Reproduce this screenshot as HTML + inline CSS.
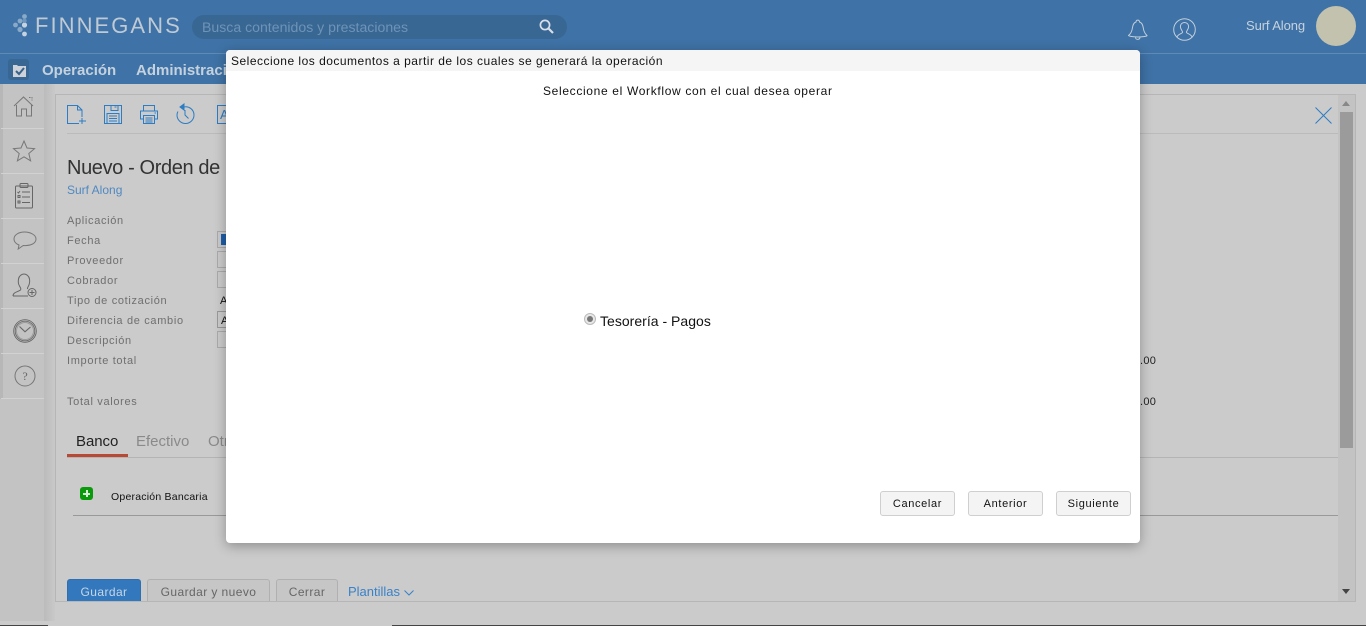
<!DOCTYPE html>
<html lang="es"><head><meta charset="utf-8"><title>Finnegans</title>
<style>
html,body{margin:0;padding:0;width:1366px;height:626px;overflow:hidden;background:#cbcbcb}
body{position:relative;font-family:"Liberation Sans",sans-serif}
.a{position:absolute;display:block}
.t{position:absolute;white-space:nowrap;line-height:16px}
.l{font-size:11px;letter-spacing:.67px;color:#6f6f6f;left:67px}
.b{position:absolute;box-sizing:border-box;height:25px;top:491px;width:75px;background:#f4f4f4;border:1px solid #cfcfcf;border-radius:3px;font-size:11px;letter-spacing:.65px;color:#111;text-align:center;line-height:24px}
.g{position:absolute;box-sizing:border-box;top:579px;height:22px;border:1px solid #b0b0b0;border-bottom:0;border-radius:3px 3px 0 0;background:#c6c6c6;color:#666;font-size:12px;text-align:center;line-height:25px;letter-spacing:.42px;overflow:hidden}
svg{position:absolute;overflow:visible}
</style></head><body>

<!-- header -->
<div class="a" style="left:0;top:0;width:1366px;height:84px;background:#3f72a6"></div>
<div class="a" style="left:0;top:53px;width:1366px;height:1px;background:#5f8ab5"></div>
<svg style="left:13px;top:14px" width="17" height="24"><g fill="#88a9c8"><circle cx="11.5" cy="2.5" r="2.4"/><circle cx="7" cy="7" r="2.4"/><circle cx="2.5" cy="11" r="2.4"/><circle cx="7" cy="15.5" r="2.6"/></g><g fill="#c5d3e0"><circle cx="11.5" cy="11" r="2.6"/><circle cx="11.5" cy="20" r="2.4"/></g><circle cx="11.5" cy="6.8" r="2.2" fill="#6e97bd"/></svg>
<div class="t" style="left:35px;top:13px;font-size:22px;line-height:26px;letter-spacing:2.05px;color:#bfcad5">FINNEGANS</div>
<div class="a" style="left:192px;top:15px;width:375px;height:24px;border-radius:12px;background:#386794"></div>
<div class="t" style="left:202px;top:19px;font-size:14.1px;color:#6f93b6">Busca contenidos y prestaciones</div>
<svg style="left:539px;top:19px" width="16" height="16" fill="none" stroke="#d6dfe8" stroke-width="1.7"><circle cx="6" cy="6" r="4.6"/><path d="M9.5 9.5L14 14" stroke-width="2.2"/></svg>
<svg style="left:1127px;top:17px" width="22" height="24" fill="none" stroke="#c2cfdb" stroke-width="1"><path d="M1.5 18.5c2.5-2 3.5-4 4-8 .4-3.300 2-5 3.500-5.500 0-2.500 3.500-2.500 3.500 0 1.800.5 3.200 2.200 3.700 5.500.5 4 1.500 6 3.800 8 .5 1-6.500 1.500-9 1.500s-9-.5-9.500-1.500z"/><path d="M8.500 20.500c.3 2.500 4 2.500 4.500 0"/></svg>
<svg style="left:1173px;top:18px" width="23" height="23" fill="none" stroke="#c2cfdb" stroke-width="1"><circle cx="11.500" cy="11.500" r="10.800"/><path d="M4 19c1-3 4.500-3 5.500-4.500.5-1-1.500-2.500-2-5-.5-3.500 2-5 4-5s4.500 1.500 4 5c-.5 2.500-2.500 4-2 5 1 1.500 4.500 1.500 5.500 4.500"/></svg>
<div class="t" style="left:1246px;top:18px;font-size:13px;letter-spacing:-.1px;color:#c6d2dd">Surf Along</div>
<div class="a" style="left:1316px;top:6px;width:40px;height:40px;border-radius:50%;background:#c3c2ae"></div>

<!-- nav -->
<div class="a" style="left:8px;top:59px;width:21px;height:21px;border-radius:3px;background:#386794"></div>
<svg style="left:13px;top:64px" width="13" height="13"><path d="M0 1h4l1 1h8v11H0z" fill="#cdd3d9"/><path d="M3 7l3 3 5-6" fill="none" stroke="#37628c" stroke-width="2"/></svg>
<div class="t" style="left:42px;top:63px;font-size:15px;font-weight:bold;color:#c5d2de">Operación</div>
<div class="t" style="left:136px;top:63px;font-size:15px;font-weight:bold;color:#c5d2de">Administración</div>

<!-- sidebar -->
<div class="a" style="left:0;top:84px;width:45px;height:537px;background:#c3c3c3"></div>
<div class="a" style="left:0;top:84px;width:3px;height:315px;background:#b7b7b7"></div>
<div class="a" style="left:44px;top:84px;width:11px;height:537px;background:linear-gradient(90deg,#bbb,#c9c9c9)"></div>
<div class="a" style="left:0;top:621px;width:55px;height:5px;background:#cbcbcb"></div>
<div class="a" style="left:1px;top:128px;width:43px;height:1px;background:#d2d2d2"></div>
<div class="a" style="left:1px;top:173px;width:43px;height:1px;background:#d2d2d2"></div>
<div class="a" style="left:1px;top:218px;width:43px;height:1px;background:#d2d2d2"></div>
<div class="a" style="left:1px;top:263px;width:43px;height:1px;background:#d2d2d2"></div>
<div class="a" style="left:1px;top:308px;width:43px;height:1px;background:#d2d2d2"></div>
<div class="a" style="left:1px;top:353px;width:43px;height:1px;background:#d2d2d2"></div>
<div class="a" style="left:1px;top:398px;width:43px;height:1px;background:#d2d2d2"></div>
<svg style="left:13px;top:95px" width="22" height="22" fill="none" stroke="#777" stroke-width="1"><path d="M1 11L10.500 2 20 11"/><path d="M3.500 10v11h5v-7h5v7h5V10"/><path d="M16 2.500h3v3" stroke-dasharray="1.500 1"/></svg>
<svg style="left:13px;top:140px" width="22" height="22" fill="none" stroke="#777" stroke-width="1"><path d="M11 1l3 7 7.500.6-5.700 4.900 1.800 7.300-6.600-4-6.600 4 1.800-7.300L.5 8.600 8 8z"/></svg>
<svg style="left:15px;top:183px" width="19" height="26" fill="none" stroke="#666" stroke-width="1"><rect x=".5" y="3" width="17" height="22" rx="1"/><rect x="5" y=".5" width="8" height="4" rx="1"/><path d="M7 9h8M7 14h8M7 19.500h8"/><rect x="3" y="12.500" width="2" height="2"/><rect x="3" y="18" width="2" height="2"/><path d="M2.500 9l1 1 1.500-2"/></svg>
<svg style="left:13px;top:231px" width="24" height="22" fill="none" stroke="#777" stroke-width="1"><path d="M11.500 1C5.500 1 1 4 1 8c0 3 2.500 5.200 5 6l-.8 4 5-3.500C17.500 15 23 12.500 23 8c0-4-5.500-7-11.500-7z"/></svg>
<svg style="left:12px;top:272px" width="26" height="26" fill="none" stroke="#666" stroke-width="1"><path d="M1 24c0-4 5-4 7.500-6 1-1 0-2-1-4-1-1.500-1.500-4-1-7 .5-3 3-5 5.500-5s5 2 5.500 5c.4 2.500 0 5-1 7-.7 1-1.200 2-1 3"/><path d="M1 24h15"/><circle cx="20" cy="20.500" r="4"/><path d="M20 18v5M17.500 20.500h5"/></svg>
<svg style="left:13px;top:319px" width="24" height="24" fill="none" stroke="#666" stroke-width=".9"><circle cx="12" cy="12" r="11.300"/><circle cx="12" cy="12" r="9.800"/><circle cx="12" cy="12" r="8.500" stroke="#999"/><path d="M6.500 7.500L12 12.800 17.500 8" stroke-width="1.100"/></svg>
<svg style="left:14px;top:365px" width="22" height="22" fill="none" stroke="#777" stroke-width="1"><circle cx="11" cy="11" r="10"/></svg>
<div class="t" style="left:14px;top:368px;width:22px;text-align:center;font-size:12px;font-family:'Liberation Serif',serif;color:#666">?</div>

<!-- panel -->
<div class="a" style="left:55px;top:94px;width:1301px;height:508px;box-sizing:border-box;border:1px solid #b6b6b6;background:#cbcbcb"></div>
<div class="a" style="left:1338px;top:95px;width:17px;height:506px;background:#c3c3c3"></div>
<div class="a" style="left:1340px;top:112px;width:13px;height:336px;background:#9b9b9b"></div>
<div class="a" style="left:1342px;top:101px;width:0;height:0;border:4px solid transparent;border-top:0;border-bottom:5px solid #888"></div>
<div class="a" style="left:1342px;top:589px;width:0;height:0;border:4px solid transparent;border-bottom:0;border-top:5px solid #444"></div>
<div class="a" style="left:67px;top:133px;width:1271px;height:1px;background:#bbb"></div>

<svg style="left:67px;top:105px" width="20" height="20" fill="none" stroke="#2d7cc4" stroke-width="1"><path d="M12 18.500H.5V.5h10l4.500 4.500v7"/><path d="M10.500.5v4.500H15"/><path d="M15 13v6M12 16h7"/></svg>
<svg style="left:104px;top:105px" width="18" height="19" fill="none" stroke="#2d7cc4" stroke-width="1"><path d="M.5.5h17v18H.5z"/><path d="M7 .5v5h7v-5M10.500 2h2"/><path d="M3 8.500h12v10H3z"/><path d="M5 11h8M5 13.500h8M5 16h8"/></svg>
<svg style="left:140px;top:105px" width="18" height="19" fill="none" stroke="#2d7cc4" stroke-width="1"><path d="M3.500 6V.5h11V6"/><path d="M3.500 14H.5V6h17v8h-3"/><path d="M3.500 10.500h11v8h-11z"/><path d="M5.500 13h7M5.500 15h7M5.500 17h7"/><path d="M14.500 8h1.500" /></svg>
<svg style="left:176px;top:103px" width="19" height="21" fill="none" stroke="#2d7cc4" stroke-width="1"><path d="M8 4c5-1 10 2.500 10 8a8.500 8.500 0 0 1-17 0c0-1.500.3-2.500 1-3.500"/><path d="M8 1v6L4 4z" fill="#2d7cc4"/><path d="M9 7v5l3.500 3.500"/></svg>
<svg style="left:217px;top:105px" width="9" height="19" fill="none" stroke="#2d7cc4"><path d="M9 .5H.5v18H9"/></svg>
<div class="t" style="left:220px;top:107px;font-size:13px;color:#2d7cc4">A</div>
<svg style="left:1315px;top:107px" width="17" height="17" stroke="#2d7cc4" stroke-width="1"><path d="M.5.5l16 16M16.500.5l-16 16"/></svg>

<div class="t" style="left:67px;top:156px;font-size:20px;line-height:24px;letter-spacing:-.38px;color:#333">Nuevo - Orden de</div>
<div class="t" style="left:67px;top:182px;font-size:12px;color:#5089c2">Surf Along</div>
<div class="t l" style="top:213px">Aplicación</div>
<div class="t l" style="top:233px">Fecha</div>
<div class="t l" style="top:253px">Proveedor</div>
<div class="t l" style="top:273px">Cobrador</div>
<div class="t l" style="top:293px">Tipo de cotización</div>
<div class="t l" style="top:313px">Diferencia de cambio</div>
<div class="t l" style="top:333px">Descripción</div>
<div class="t l" style="top:353px">Importe total</div>
<div class="t l" style="top:394px">Total valores</div>

<div class="a" style="left:217px;top:231px;width:9px;height:17px;box-sizing:border-box;border:1px solid #aaa;border-right:0"></div>
<div class="a" style="left:221px;top:234px;width:5px;height:11px;background:#1f5fa8"></div>
<div class="a" style="left:217px;top:251px;width:9px;height:17px;box-sizing:border-box;border:1px solid #aaa;border-right:0"></div>
<div class="a" style="left:217px;top:271px;width:9px;height:17px;box-sizing:border-box;border:1px solid #aaa;border-right:0"></div>
<div class="t" style="left:220px;top:293px;font-size:11px;color:#111">A</div>
<div class="a" style="left:217px;top:311px;width:9px;height:17px;box-sizing:border-box;border:1px solid #999;border-right:0"></div>
<div class="t" style="left:221px;top:313px;font-size:11px;color:#111">A</div>
<div class="a" style="left:217px;top:331px;width:9px;height:17px;box-sizing:border-box;border:1px solid #aaa;border-right:0"></div>

<div class="t" style="left:1140px;top:353px;font-size:11px;letter-spacing:.3px;color:#222">.00</div>
<div class="t" style="left:1140px;top:394px;font-size:11px;letter-spacing:.3px;color:#222">.00</div>

<div class="t" style="left:76px;top:434px;font-size:15px;letter-spacing:-.05px;color:#222">Banco</div>
<div class="t" style="left:136px;top:434px;font-size:15px;color:#8a8a8a">Efectivo</div>
<div class="t" style="left:208px;top:434px;font-size:15px;color:#8a8a8a">Otros</div>
<div class="a" style="left:67px;top:457px;width:1271px;height:1px;background:#b4b4b4"></div>
<div class="a" style="left:67px;top:454px;width:61px;height:3px;background:#b84a35"></div>

<div class="a" style="left:80px;top:487px;width:13px;height:13px;border-radius:3px;background:#0b9a0b"></div>
<div class="a" style="left:83px;top:492.500px;width:7px;height:2px;background:#d8ecd8"></div>
<div class="a" style="left:85.500px;top:490px;width:2px;height:7px;background:#d8ecd8"></div>
<div class="t" style="left:111px;top:489px;font-size:10.500px;letter-spacing:.22px;color:#111">Operación Bancaria</div>
<div class="a" style="left:73px;top:515px;width:1265px;height:1px;background:#999"></div>

<div class="g" style="left:67px;width:74px;background:#3377bd;border-color:#2f6fb0;color:#c6d6e6">Guardar</div>
<div class="g" style="left:147px;width:123px">Guardar y nuevo</div>
<div class="g" style="left:276px;width:62px">Cerrar</div>
<div class="t" style="left:348px;top:584px;font-size:13px;color:#3a82c8">Plantillas</div>
<svg style="left:404px;top:590px" width="10" height="6" fill="none" stroke="#3a82c8"><path d="M.5.5L5 5 9.500.5"/></svg>

<div class="a" style="left:0;top:625px;width:48px;height:1px;background:#444"></div>
<div class="a" style="left:392px;top:625px;width:974px;height:1px;background:#444"></div>

<!-- dialog -->
<div class="a" style="left:226px;top:50px;width:914px;height:493px;background:#fff;border-radius:4px;box-shadow:0 3px 12px rgba(0,0,0,.3)"></div>
<div class="a" style="left:226px;top:50px;width:914px;height:21px;background:#f5f5f5;border-radius:4px 4px 0 0"></div>
<div class="t" style="left:231px;top:53px;font-size:12px;letter-spacing:.49px;color:#111">Seleccione los documentos a partir de los cuales se generará la operación</div>
<div class="t" style="left:543px;top:83px;font-size:12px;letter-spacing:.66px;color:#111">Seleccione el Workflow con el cual desea operar</div>

<div class="a" style="left:584px;top:313px;width:12px;height:12px;box-sizing:border-box;border-radius:50%;background:#e8e8e8;border:1px solid #bbb"></div>
<div class="a" style="left:587px;top:316px;width:6px;height:6px;border-radius:50%;background:#777"></div>
<div class="t" style="left:600px;top:313px;font-size:14px;letter-spacing:.02px;color:#111">Tesorería - Pagos</div>

<div class="b" style="left:880px">Cancelar</div>
<div class="b" style="left:968px">Anterior</div>
<div class="b" style="left:1056px">Siguiente</div>
</body></html>
